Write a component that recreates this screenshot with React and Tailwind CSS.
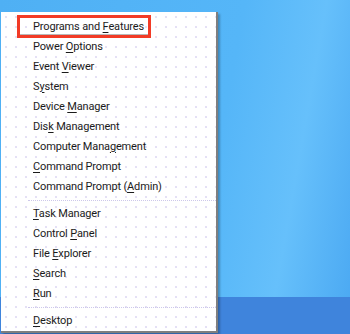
import React from "react";

const groups = [
  [
    { pre: "Programs and ", key: "F", post: "eatures", active: true },
    { pre: "Power ", key: "O", post: "ptions" },
    { pre: "Event ", key: "V", post: "iewer" },
    { pre: "S", key: "y", post: "stem" },
    { pre: "Device ", key: "M", post: "anager" },
    { pre: "Dis", key: "k", post: " Management" },
    { pre: "Computer Mana", key: "g", post: "ement" },
    { pre: "", key: "C", post: "ommand Prompt" },
    { pre: "Command Prompt (", key: "A", post: "dmin)" },
  ],
  [
    { pre: "", key: "T", post: "ask Manager" },
    { pre: "Control ", key: "P", post: "anel" },
    { pre: "File ", key: "E", post: "xplorer" },
    { pre: "", key: "S", post: "earch" },
    { pre: "", key: "R", post: "un" },
  ],
  [{ pre: "", key: "D", post: "esktop" }],
];

const MenuItem = ({ item }) => (
  <div className="relative h-[20px] flex items-center pl-[32px]">
    {item.active && (
      <div className="absolute left-[16px] top-[-2px] w-[134px] h-[23px] border-[3px] border-[#f23b26]">
        <div className="w-full h-full border-b border-[#b8b8b8]" />
      </div>
    )}
    <span className="relative">
      {item.pre}
      <span className="underline underline-offset-2">{item.key}</span>
      {item.post}
    </span>
  </div>
);

const App = () => {
  return (
    <div
      className="relative w-[350px] h-[334px] overflow-hidden flex flex-col bg-[linear-gradient(100deg,#4fb0f4_0%,#55b6f8_60%,#66c0fb_80%,#4aa8f2_100%)]"
      style={{ fontFamily: 'Roboto, "Liberation Sans", sans-serif' }}
    >
      {/* desktop */}
      <div className="flex-1" />
      {/* taskbar */}
      <div className="h-[37px] bg-[#3f84dc]" />

      {/* Win+X menu */}
      <div className="absolute left-[1px] top-[12px] w-[217px] h-[321px] bg-white border-r-2 border-b-2 border-[#7f7f7f] shadow-[2px_2px_2px_rgba(0,0,0,0.25)] bg-[radial-gradient(circle,#e4dff6_0.7px,transparent_1px)] bg-[length:10px_10px] text-[11px] tracking-[-0.15px] text-[#1b1b1b] pt-[5px]">
        {groups.map((group, gi) => (
          <div key={gi}>
            {gi > 0 && (
              <div className="h-[7px] flex items-center pl-[27px]">
                <div className="w-full border-t border-dotted border-[#cdc8ea]" />
              </div>
            )}
            {group.map((item, i) => (
              <MenuItem key={i} item={item} />
            ))}
          </div>
        ))}
      </div>
    </div>
  );
};

export default App;
